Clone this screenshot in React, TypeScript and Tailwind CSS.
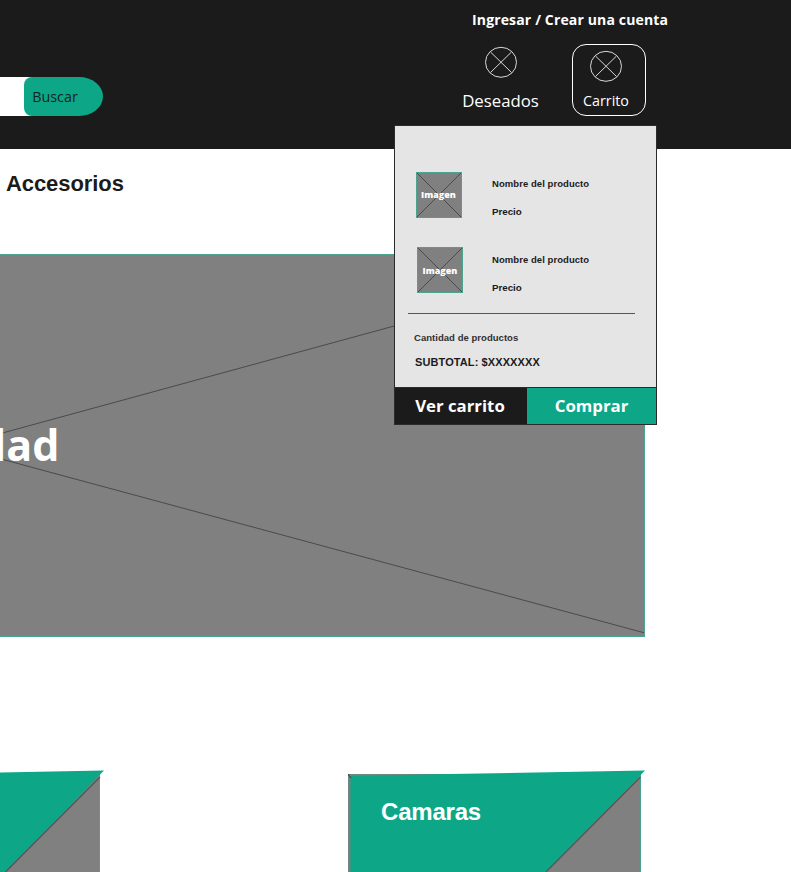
import React from "react";

const sans = "font-['Open_Sans',sans-serif]";
const arial = "font-['Liberation_Sans',sans-serif]";

function CrossedCircle() {
  return (
    <svg width="32" height="32" viewBox="0 0 32 32" fill="none" stroke="#d8d8d8" strokeWidth="1" className="block">
      <ellipse cx="16" cy="16.300" rx="15.5" ry="15" />
      <path d="M5.500 6L26.500 26.500M26.500 6L5.500 26.500" />
    </svg>
  );
}

function Product({ className, indent, label }: { className: string; indent: string; label: string }) {
  return (
    <div className={`flex h-[46px] ${className}`}>
      <div className="relative flex h-[46px] w-[46px] items-center justify-center border border-[#4aa58f] bg-[#808080]">
        <svg className="absolute inset-0" width="44" height="44" viewBox="0 0 44 44" stroke="#3c3c3c" strokeWidth="0.8">
          <path d="M0 0L44 44M44 0L0 44" />
        </svg>
        <span className={`relative ${label} text-[9px] leading-none font-extrabold text-white font-['Open_Sans',sans-serif]`}>Imagen</span>
      </div>
      <div className={`${indent} pt-[6px] font-bold text-[#1b1b1b] ${arial}`}>
        <div className="h-[28px] text-[9.5px] leading-[12px] tracking-[0.06px] whitespace-nowrap">Nombre del producto</div>
        <div className="text-[9.800px] leading-[12px] tracking-[-0.05px]">Precio</div>
      </div>
    </div>
  );
}

function CartPopup() {
  return (
    <aside className="absolute top-[125px] left-[394px] flex h-[300px] w-[263px] flex-col border border-[#2b2b2b] bg-[#e5e5e5]">
      <div className="flex h-[261px] flex-col">
        <div className="pt-[46px] pl-[21px]">
          <Product className="mb-[30px]" indent="ml-[30px]" label="-mt-px -ml-px" />
          <Product className="-mt-px ml-px" indent="ml-[29px] mt-px" label="mt-0" />
        </div>
        <div className="mt-[20px] ml-[13px] h-px w-[227px] bg-[#555]" />
        <div className={`mt-[18px] ml-[19px] text-[9.5px] leading-[12px] font-bold tracking-[0.04px] text-[#303030] ${arial}`}>Cantidad de productos</div>
        <div className={`mt-[12px] ml-[20px] text-[11px] leading-[13px] font-bold tracking-[0.1px] text-[#1b1b1b] ${arial}`}>SUBTOTAL: $XXXXXXX</div>
      </div>
      <div className={`flex h-[37px] border-t border-[#2b2b2b] text-[16.800px] font-bold text-white ${sans}`}>
        <button className="flex w-[132px] items-center justify-center bg-[#1b1b1b] pr-[2px] pb-px">Ver carrito</button>
        <button className="flex flex-1 items-center justify-center bg-[#0da788] pb-px">Comprar</button>
      </div>
    </aside>
  );
}

export default function App() {
  return (
    <div className="relative h-[872px] w-[791px] overflow-hidden bg-white">
      <header className="flex h-[149px] items-start bg-[#1b1b1b]">
        <div className="mt-[77px] flex h-[39px] w-[104px]">
          <div className="h-full w-[32px] bg-white" />
          <button className={`-ml-[8px] h-full w-[79px] [border-radius:8px_24px_24px_8px/8px_19.5px_19.5px_8px] bg-[#0da788] pr-[17px] text-[14.300px] text-[#10241f] ${sans}`}>Buscar</button>
        </div>
        <div className={`ml-[358px] w-[220px] text-white ${sans}`}>
          <div className="mt-[10px] ml-[10px] text-[14px] leading-[20px] font-bold tracking-[0.15px] whitespace-nowrap">Ingresar / Crear una cuenta</div>
          <div className="mt-[14px] flex">
            <div className="flex w-[77px] flex-col items-center pt-[2px]">
              <CrossedCircle />
              <span className="mt-[12px] text-[16.800px] leading-[22px]">Deseados</span>
            </div>
            <div className="ml-[33px] flex h-[72px] w-[74px] flex-col items-center rounded-[14px] border-[1.5px] border-white pt-[5px]">
              <div className="-ml-[6px]"><CrossedCircle /></div>
              <span className="-ml-[6px] mt-[9px] text-[14.300px] leading-[20px]">Carrito</span>
            </div>
          </div>
        </div>
      </header>
      <nav className={`h-[105px] pt-[22px] pl-[6px] text-[22px] leading-[26px] font-bold tracking-[-0.08px] text-[#1b1b1b] ${arial}`}>Accesorios</nav>
      <section className="relative h-[383px] w-[645px] border-y border-r border-[#4aa58f] bg-[#808080]">
        <svg className="absolute inset-0" width="644" height="381" viewBox="0 255 644 381" stroke="#444" strokeWidth="0.9">
          <path d="M-47 446.500L645 257.500M-47 446L645 633" />
        </svg>
        <div className={`relative -ml-[21px] pt-[160px] text-[43px] leading-[60px] font-bold text-white ${sans}`}>dad</div>
      </section>
      <section className="mt-[133px] flex h-[102px]">
        <div className="w-[105px]">
          <svg width="105" height="102" viewBox="0 770 105 102" className="block">
            <path d="M0 774H100V872H0Z" fill="#808080" />
            <path d="M99.500 775V872" stroke="#4aa58f" />
            <path d="M0 772.500L104 770.500L5.500 872H0Z" fill="#0da788" />
            <path d="M100 777L5.500 872" stroke="#555" strokeWidth="1.300" />
          </svg>
        </div>
        <div className="relative ml-[243px] w-[298px]">
          <svg className="absolute inset-0" width="298" height="102" viewBox="348 770 298 102">
            <path d="M348 774H641V872H348Z" fill="#6f8580" />
            <path d="M560 774H641V872H540Z" fill="#808080" />
            <path d="M640.500 775V872" stroke="#4aa58f" />
            <path d="M350.500 776L450 774L645 770.500L546 872H350.500Z" fill="#0da788" />
            <path d="M348 774L351 778" stroke="#333" />
            <path d="M640.500 777L546 872" stroke="#555" strokeWidth="1.300" />
          </svg>
          <h2 className={`relative pt-[27px] pl-[33px] text-[24px] leading-[30px] font-bold tracking-[-0.2px] text-white ${arial}`}>Camaras</h2>
        </div>
      </section>
      <CartPopup />
    </div>
  );
}
